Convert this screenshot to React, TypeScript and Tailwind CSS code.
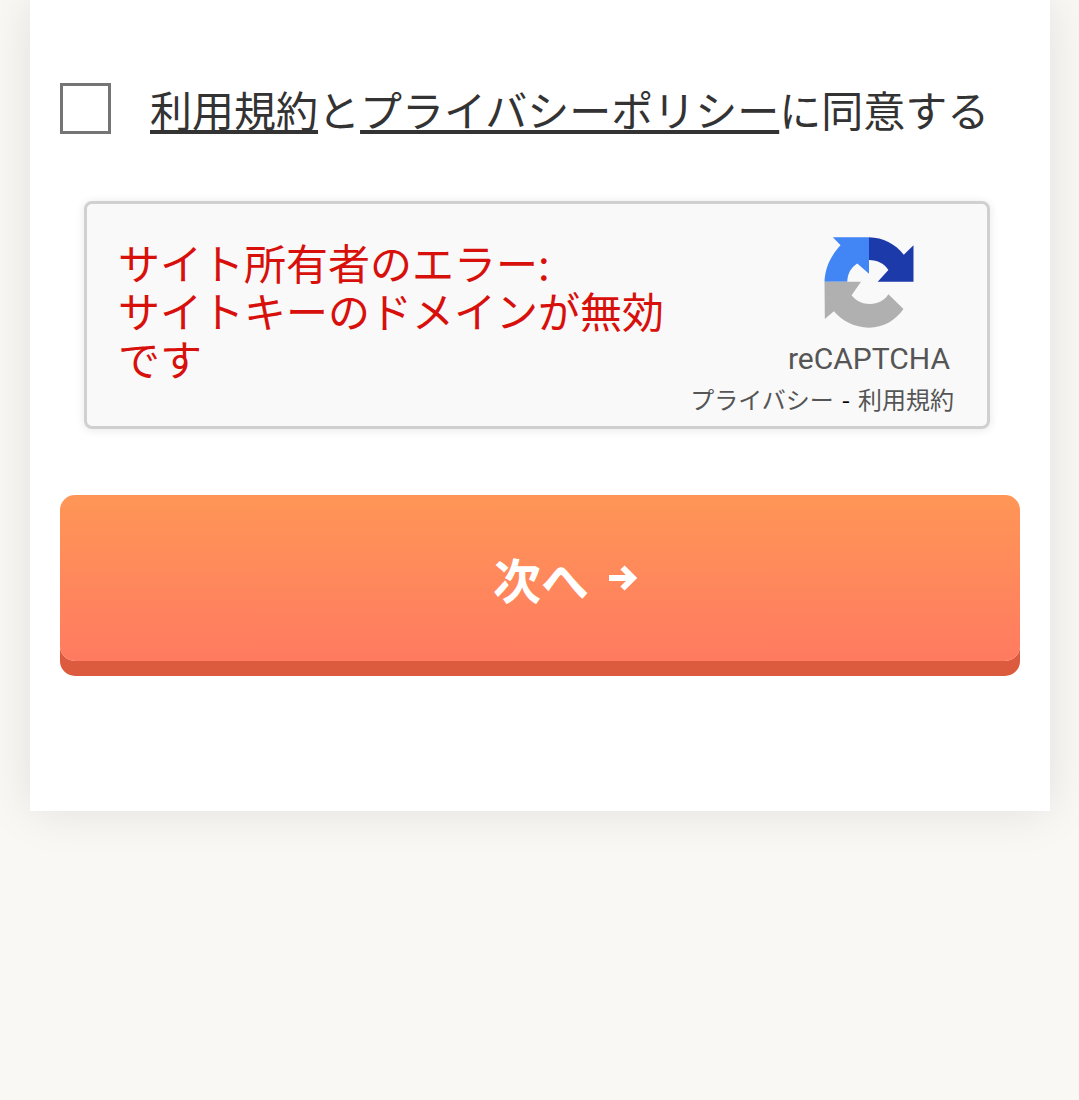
import React, {useState} from "react";

const RecaptchaLogo = () => (
    <svg className="h-[91px] w-[90px]" viewBox="0 0 268 272" aria-hidden="true">
        <path fill="#1c3aa9" d="M134 1C176 2 212 20 238 53L267 25V134H160L192 99C180 80 160 69 134 69Z"/>
        <path fill="#4285f4" d="M26 1H134V110L99 79C81 90 70 108 69 134H1C3 93 18 58 49 25Z"/>
        <path fill="#b0b0b0" d="M1 134H110L82 174C95 191 114 200 137 200C160 200 180 190 192 171L237 215C212 250 177 270 134 271C90 270 55 252 29 222L2 245Z"/>
    </svg>
)

const Arrow = () => (
    <svg className="h-7 w-7" viewBox="0 0 28 28" fill="none" stroke="currentColor" strokeWidth="6" aria-hidden="true">
        <path d="M0 14H22"/>
        <path d="M13.5 3.5L24 14L13.5 24.5"/>
    </svg>
)

const Recaptcha = () => (
    <div className="ml-6 mr-[30px] flex h-[228px] justify-between rounded-lg border-3 border-[#d0d0d0] bg-[#f9f9f9] pl-[31px] pr-[33px] shadow-[0_1px_8px_1px_rgba(0,0,0,0.08)]">
        <p className="mt-[34px] w-[546px] shrink-0 whitespace-pre-line text-[42px] leading-12 text-[#d8100c]">
            {"サイト所有者のエラー:\nサイトキーのドメインが無効です"}
        </p>
        <div className="w-[170px] shrink-0">
            <div className="mt-[33px] flex justify-center">
                <RecaptchaLogo/>
            </div>
            <div className="mt-[13px] text-center font-['Roboto',sans-serif] text-[30px] leading-9 text-[#555555]">
                reCAPTCHA
            </div>
            <div className="mt-[6px] flex justify-end gap-2 whitespace-nowrap text-2xl text-[#555555]">
                <a href="#privacy">プライバシー</a>
                <span className="text-black">-</span>
                <a href="#terms">利用規約</a>
            </div>
        </div>
    </div>
)

const App = () => {
    const [agree, setAgree] = useState(false)

    return (
        <div className="min-h-screen overflow-hidden bg-[#f9f8f4] pl-[30px] pr-[29px] font-['Noto_Sans_CJK_JP',sans-serif]">
            <form
                className="bg-white px-[30px] pb-[135px] pt-[77px] shadow-[0_0_45px_rgba(0,0,0,0.1)]"
                onSubmit={(e) => e.preventDefault()}
            >
                <div className="flex items-center">
                    <input
                        id="agree"
                        type="checkbox"
                        checked={agree}
                        onChange={(e) => setAgree(e.target.checked)}
                        className="h-[51px] w-[51px] shrink-0 appearance-none border-3 border-[#757575] bg-white checked:bg-[#757575]"
                    />
                    <label htmlFor="agree" className="ml-[39px] whitespace-nowrap text-[42px] leading-[63px] text-[#333333]">
                        <a href="#terms" className="underline decoration-4 underline-offset-3 [text-decoration-skip-ink:none]">利用規約</a>
                        と
                        <a href="#privacy" className="underline decoration-4 underline-offset-3 [text-decoration-skip-ink:none]">プライバシーポリシー</a>
                        に同意する
                    </label>
                </div>
                <div className="mt-[61px]">
                    <Recaptcha/>
                </div>
                <button
                    type="submit"
                    className="mt-[66px] mb-[15px] flex h-[166px] w-full items-center justify-center gap-5 rounded-[15px] bg-linear-to-b from-[#ff9656] to-[#ff7a60] pl-[50px] text-5xl font-bold text-white shadow-[0_15px_0_#dc5a3e]"
                >
                    次へ
                    <Arrow/>
                </button>
            </form>
        </div>
    )
}

export default App
